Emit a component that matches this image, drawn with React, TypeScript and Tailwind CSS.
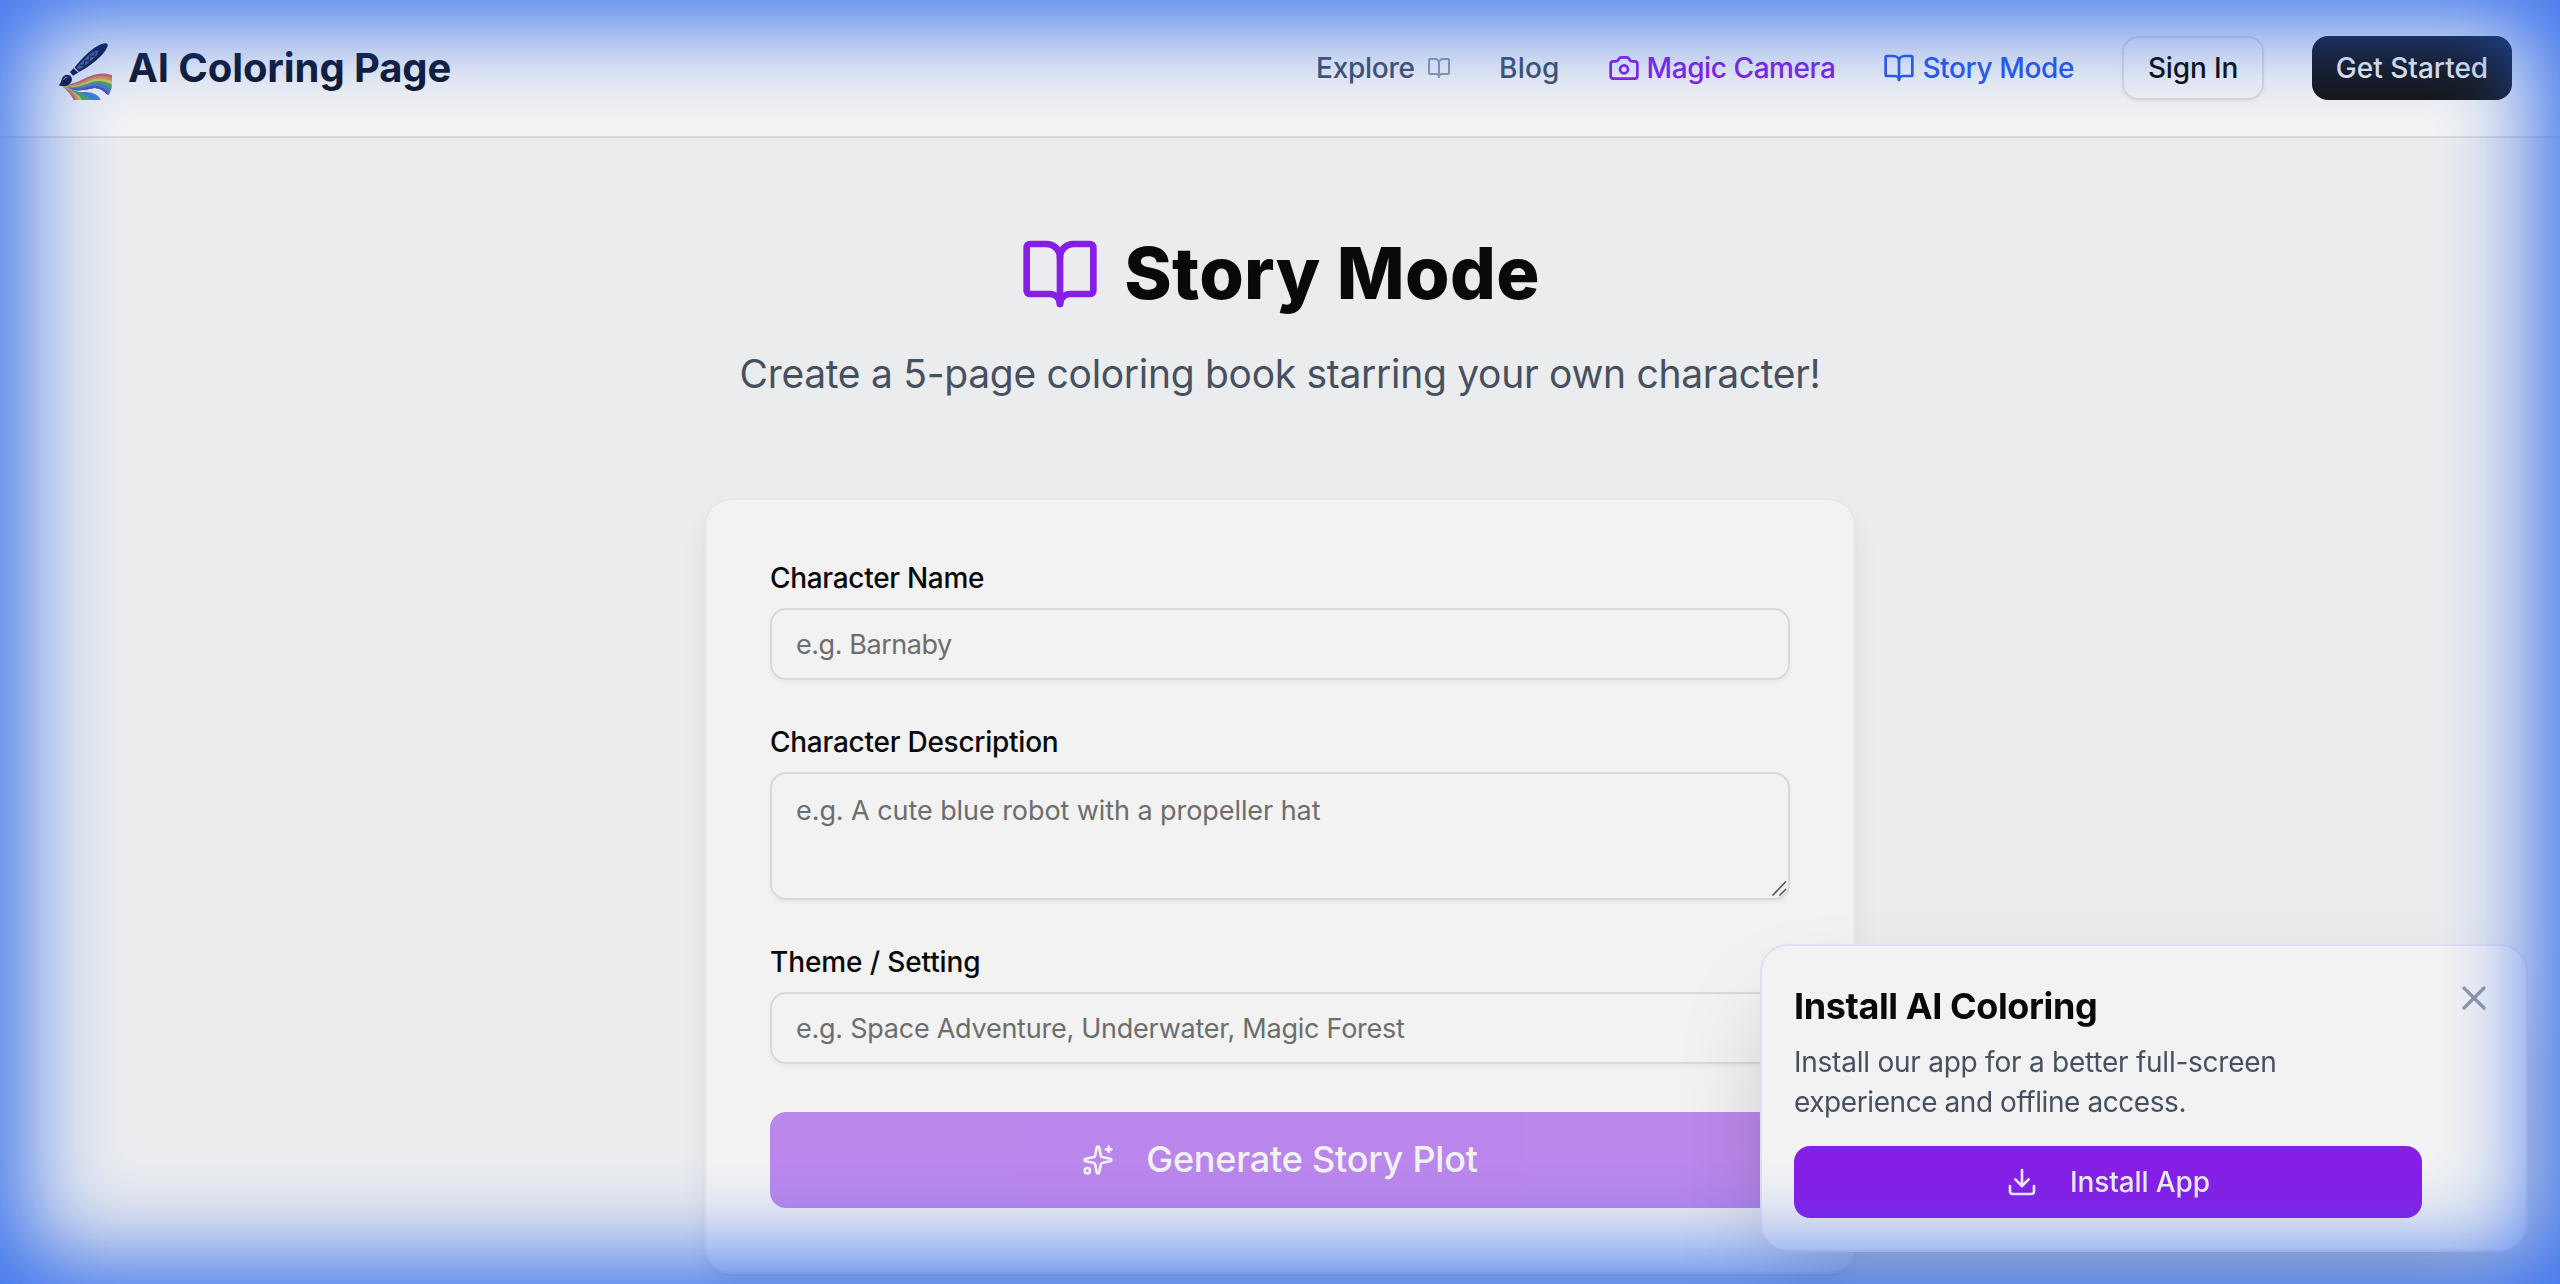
import React, { useState } from 'react';
import { BookOpen, Camera, Download, Sparkles, X } from 'lucide-react';

const Logo = () => (
    <svg viewBox="0 0 64 64" className="h-16 w-16 shrink-0" aria-hidden="true">
        {/* upper ribbon, outer colour first */}
        <path d="M13 49.5C25 49 33 44 41 40.5C49 37 57 36.500 64 39V50C63 54 62 57 60 59C55 54 51 51.500 46 52C38 53 31 56.500 22 52.500Z" fill="#db6a62" />
        <path d="M15 50C26 50 34 46 42 42.500C50 39.300 57 39.500 64 42V50C63 54 62 57 60 59C55 54 51 51.500 46 52C38 53 31 56.500 22 52.500Z" fill="#e79a52" />
        <path d="M17 50.500C27 51 35 47.500 43 44.200C50 41.600 57 42.200 64 45V50C63 54 62 57 60 59C55 54 51 51.500 46 52C38 53 31 56.500 22 52.500Z" fill="#e6d25c" />
        <path d="M18 51C28 52 36 49 43 46.200C50 43.900 57 45 63.700 48.500V50C63 54 62 57 60 59C55 54 51 51.500 46 52C38 53 31 56.500 22 52.500Z" fill="#52ab62" />
        <path d="M19 51.500C29 53 36 50.500 43 48.200C50 46.400 56 48 62.800 52.800C62 55.500 61 58 60 59C55 54 51 51.500 46 52C38 53 31 56.500 22 52.500Z" fill="#3f86dc" />
        <path d="M21 52C30 54 36 52.300 43 50.300C50 49 55 51 61.300 57L60 59C55 54 51 51.500 46 52C38 53 31 56.500 22 52.500Z" fill="#6b45c6" />
        {/* lower ribbon */}
        <path d="M13.500 50C18 53 23 58 25.500 64H30C27 58 20 52 13.500 50Z" fill="#d9655f" />
        <path d="M15 50.500C21 53.500 25 58 28 64H33C29 57 22 52 15 50.500Z" fill="#e79a52" />
        <path d="M17 51.500C24 54.500 28 58.500 31 64H36C31 57 25 53 17 51.500Z" fill="#e6d25c" />
        <path d="M20 52.800C27 56 31 59 34 64H44C39 58 32 56 20 52.800Z" fill="#4faa6a" />
        <path d="M30 56.500C38 55 48 56 52.500 63L52 64H43C39 60 36 58 30 56.500Z" fill="#3f86dc" />
        {/* brush */}
        <path d="M26.500 31.500C30 27 35 21.500 40 17C45 12.500 51.500 8 56.500 7.300C59.500 7 60.300 8.500 59.300 11C57.500 15.500 53 20.500 47.500 25C42 29.500 36 33.500 31 36Z" fill="#0c1638" />
        <path d="M28.500 31.800C33 26.500 39 19.800 45.500 15.500L50.500 14.500L49 19C44 24.500 37 30 31 33.800Z" fill="#53618a" />
        <path d="M32 29L36 29.500L37 24.500L41 25L42 20L46 20.500L47 16" fill="none" stroke="#0c1638" strokeWidth="1.200" />
        <path d="M22 36L25.500 32.200L30.300 36.500L25 39.800Z" fill="#0c1638" />
        <path d="M26 31.500L30.800 36.500" stroke="#d2dbf3" strokeWidth="0.900" />
        <path d="M21.500 38L24 41.500" stroke="#d2dbf3" strokeWidth="0.900" />
        <path d="M10.500 49.200C13.500 47.800 12.500 43.500 15.200 40.500C17.700 38 22 38.200 23.600 41.500C25 45 22 49.300 17.500 50C14.500 50.300 12.500 49.900 10.500 49.200Z" fill="#0c1638" />
        <path d="M15.800 43.500C16.400 42 17.500 41.200 19 41.100" fill="none" stroke="#c3cff0" strokeWidth="0.900" strokeLinecap="round" />
    </svg>
);

const Header = () => (
    <header className="flex h-[138px] items-center justify-between border-b-2 border-neutral-200 bg-white px-12">
        <a href="#" className="flex items-center gap-4">
            <Logo />
            <span className="text-[40px] leading-none font-bold tracking-[-0.1px] text-slate-900">AI Coloring Page</span>
        </a>
        <nav className="flex items-center gap-12 text-[28px] leading-10 font-medium">
            <a href="#" className="flex items-center gap-[13px] text-slate-600">
                <span className="w-[98px] tracking-[-0.26px]">Explore</span>
                <BookOpen size={24} className="text-slate-400" />
            </a>
            <a href="#" className="tracking-[0.2px] text-slate-600">Blog</a>
            <a href="#" className="flex items-center gap-[7px] tracking-[-0.42px] text-[#8e20f2]">
                <Camera size={32} />
                Magic Camera
            </a>
            <a href="#" className="flex items-center gap-[7px] tracking-[-0.37px] text-[#2b5cf5]">
                <BookOpen size={32} />
                Story Mode
            </a>
            <button className="flex h-16 w-[142px] items-center justify-center rounded-2xl border-2 border-neutral-200 bg-white font-medium tracking-[-0.15px] text-neutral-950 shadow-[0_2px_4px_rgba(0,0,0,0.05)]">Sign In</button>
            <button className="flex h-16 w-[200px] items-center justify-center rounded-2xl bg-neutral-900 font-medium text-neutral-50">Get Started</button>
        </nav>
    </header>
);

const Field = ({ id, label, labelClass, children }: { id: string, label: string, labelClass: string, children: React.ReactNode }) => (
    <div className="flex flex-col gap-4">
        <label htmlFor={id} className={`text-[28px] leading-7 font-medium text-neutral-950 ${labelClass}`}>{label}</label>
        {children}
    </div>
);

const inputClass = 'block w-full rounded-2xl border-2 border-neutral-200 bg-transparent px-6 text-[27px] leading-10 text-neutral-950 shadow-[0_2px_4px_rgba(0,0,0,0.05)] outline-none placeholder:text-neutral-500';

const StoryForm = () => {
    const [name, setName] = useState('');
    const [description, setDescription] = useState('');
    const [theme, setTheme] = useState('');

    return (
        <form className="mx-auto w-[1152px] space-y-12 rounded-[28px] border-2 border-gray-100 bg-white p-16 shadow-[0_20px_30px_-6px_rgba(0,0,0,0.1),0_8px_12px_-8px_rgba(0,0,0,0.1)]">
            <Field id="name" label="Character Name" labelClass="tracking-[-0.31px]">
                <input id="name" value={name} onChange={e => setName(e.target.value)} placeholder="e.g. Barnaby" className={`${inputClass} h-[72px] tracking-[-0.45px]`} />
            </Field>
            <Field id="description" label="Character Description" labelClass="tracking-[-0.26px]">
                <div className="relative">
                    <textarea id="description" value={description} onChange={e => setDescription(e.target.value)} placeholder="e.g. A cute blue robot with a propeller hat" className={`${inputClass} h-32 resize-none pt-[17px] pb-4 tracking-[-0.07px]`} />
                    <svg viewBox="0 0 18 18" className="absolute right-[2px] bottom-[2px] h-[18px] w-[18px]" stroke="#5f5f5f" strokeWidth="1.700" aria-hidden="true">
                        <path d="M2.500 15.500L16 1.500M9.500 15.500L16 9" />
                    </svg>
                </div>
            </Field>
            <Field id="theme" label="Theme / Setting" labelClass="tracking-[-0.12px]">
                <input id="theme" value={theme} onChange={e => setTheme(e.target.value)} placeholder="e.g. Space Adventure, Underwater, Magic Forest" className={`${inputClass} h-[72px] tracking-[-0.25px]`} />
            </Field>
            <button type="button" disabled className="flex h-24 w-full items-center justify-center gap-8 rounded-2xl bg-[#8e20f2] text-[36px] font-medium tracking-[-0.21px] text-white opacity-50">
                <Sparkles size={32} />
                <span className="pb-0.5">Generate Story Plot</span>
            </button>
        </form>
    );
};

const InstallPrompt = () => (
    <aside className="fixed right-8 bottom-8 flex w-[768px] items-start gap-8 rounded-[28px] border-2 border-purple-100 bg-white p-8 shadow-[0_50px_100px_-24px_rgba(0,0,0,0.25)]">
        <div className="w-[628px]">
            <h3 className="text-[36px] leading-[56px] font-bold tracking-[-0.4px] text-neutral-950">Install AI Coloring</h3>
            <p className="mt-2 text-[28px] leading-10 text-gray-600">
                <span className="block tracking-[-0.24px]">Install our app for a better full-screen</span>
                <span className="block tracking-[-0.43px]">experience and offline access.</span>
            </p>
            <button className="mt-6 flex h-[72px] w-full items-center justify-center gap-8 rounded-2xl bg-[#8e20f2] text-[28px] font-medium tracking-[-0.1px] text-neutral-50">
                <Download size={32} />
                Install App
            </button>
        </div>
        <button aria-label="Close" className="text-gray-400">
            <X size={40} />
        </button>
    </aside>
);

export default function App() {
    return (
        <div className="h-[1284px] overflow-hidden bg-[#f8f9fb] font-[Inter,sans-serif]">
            <Header />
            <main className="pt-24">
                <div className="mb-24 text-center">
                    <h1 className="flex items-center justify-center gap-6 text-[72px] leading-[80px] font-extrabold tracking-[0.34px] text-neutral-950">
                        <BookOpen size={80} className="text-[#8e20f2]" />
                        <span className="-mt-0.5 leading-[76px]">Story Mode</span>
                    </h1>
                    <p className="mt-8 text-[39px] leading-[56px] tracking-[-0.3px] text-gray-600">Create a 5-page coloring book starring your own character!</p>
                </div>
                <StoryForm />
            </main>
            <InstallPrompt />
            <div className="pointer-events-none fixed inset-0 bg-black/5 shadow-[inset_0_0_92px_24px_rgba(37,99,235,0.9)]" />
        </div>
    );
}
